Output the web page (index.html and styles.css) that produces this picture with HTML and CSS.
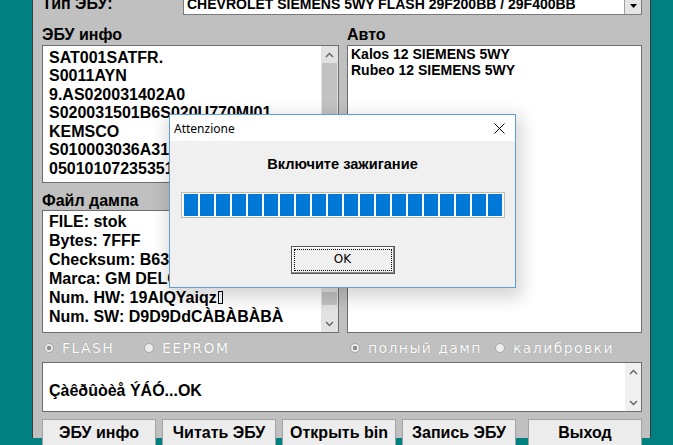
FILE: index.html
```html
<!DOCTYPE html>
<html lang="ru">
<head>
  <meta charset="UTF-8">
  <title>ЭБУ</title>
  <link rel="stylesheet" href="styles.css">
</head>
<body>
  <div class="window">
    <div class="type-row">
      <span class="type-label">Тип ЭБУ:</span>
      <div class="combo">
        <div class="combo-text">CHEVROLET SIEMENS 5WY FLASH 29F200BB / 29F400BB</div>
        <div class="combo-btn">
          <svg width="7" height="4" viewBox="0 0 7 4"><polygon points="0,0 7,0 3.5,4" fill="#000"/></svg>
        </div>
      </div>
    </div>

    <div class="panels">
      <div class="col col-left">
        <div class="label">ЭБУ инфо</div>
        <div class="listbox ecu-list">
          <div class="items">
            <div>SAT001SATFR.</div>
            <div>S0011AYN</div>
            <div>9.AS020031402A0</div>
            <div>S020031501B6S020U770MI01</div>
            <div>KEMSCO</div>
            <div>S010003036A31B6</div>
            <div>05010107235351</div>
          </div>
          <div class="vscroll">
            <div class="arrow"><svg width="9" height="6" viewBox="0 0 9 6"><polyline points="1,5 4.5,1.5 8,5" fill="none" stroke="#606060" stroke-width="1.3"/></svg></div>
            <div class="thumb thumb-big"></div>
            <div class="track"></div>
          </div>
        </div>

        <div class="label dump-label">Файл дампа</div>
        <div class="listbox dump-list">
          <div class="items">
            <div>FILE: stok</div>
            <div>Bytes: 7FFF</div>
            <div>Checksum: B63A</div>
            <div>Marca: GM DELCO</div>
            <div>Num. HW: 19AIQYaiqz<span class="nochar"></span></div>
            <div>Num. SW: D9D9DdCÀBÀBÀBÀ</div>
          </div>
          <div class="vscroll">
            <div class="arrow"><svg width="9" height="6" viewBox="0 0 9 6"><polyline points="1,5 4.5,1.5 8,5" fill="none" stroke="#606060" stroke-width="1.3"/></svg></div>
            <div class="track"></div>
            <div class="thumb thumb-small"></div>
            <div class="track-end"></div>
            <div class="arrow"><svg width="9" height="6" viewBox="0 0 9 6"><polyline points="1,1 4.5,4.5 8,1" fill="none" stroke="#606060" stroke-width="1.3"/></svg></div>
          </div>
        </div>
      </div>

      <div class="col col-right">
        <div class="label">Авто</div>
        <div class="listbox car-list">
          <div class="items">
            <div>Kalos 12 SIEMENS 5WY</div>
            <div>Rubeo 12 SIEMENS 5WY</div>
          </div>
        </div>
      </div>
    </div>

    <div class="radios">
      <div class="radio-group group-left">
        <label class="radio radio-flash"><span class="dot checked"></span>FLASH</label>
        <label class="radio"><span class="dot"></span>EEPROM</label>
      </div>
      <div class="radio-group group-right">
        <label class="radio radio-full"><span class="dot checked"></span>полный дамп</label>
        <label class="radio"><span class="dot"></span>калибровки</label>
      </div>
    </div>

    <div class="status">
      <div class="status-text">Çàêðûòèå ÝÁÓ...OK</div>
      <div class="status-scroll">
        <div class="arrow"><svg width="9" height="6" viewBox="0 0 9 6"><polyline points="1,5 4.5,1.5 8,5" fill="none" stroke="#606060" stroke-width="1.3"/></svg></div>
        <div class="arrow"><svg width="9" height="6" viewBox="0 0 9 6"><polyline points="1,1 4.5,4.5 8,1" fill="none" stroke="#606060" stroke-width="1.3"/></svg></div>
      </div>
    </div>

    <div class="buttons">
      <button class="btn">ЭБУ инфо</button>
      <button class="btn">Читать ЭБУ</button>
      <button class="btn">Открыть bin</button>
      <button class="btn">Запись ЭБУ</button>
      <button class="btn btn-exit">Выход</button>
    </div>
  </div>

  <!-- modal message box -->
  <div class="dialog">
    <div class="dlg-title">
      <span>Attenzione</span>
      <svg width="11" height="11" viewBox="0 0 11 11"><path d="M0.5 0.5 L10.5 10.5 M10.5 0.5 L0.5 10.5" stroke="#000" stroke-width="1"/></svg>
    </div>
    <div class="dlg-body">
      <div class="dlg-msg">Включите зажигание</div>
      <div class="progress">
        <i></i><i></i><i></i><i></i><i></i><i></i><i></i><i></i><i></i><i></i>
        <i></i><i></i><i></i><i></i><i></i><i></i><i></i><i></i><i></i><i></i>
      </div>
      <button class="ok-btn"><span>OK</span></button>
    </div>
  </div>
</body>
</html>
```

FILE: styles.css
```css
/* main window */
body {
  margin: 0;
  height: 445px;
  overflow: hidden;
  position: relative;
  background: #008080;
  font-family: "Liberation Sans", Arial, sans-serif;
  color: #000;
}
.window {
  margin-left: 32px;
  width: 619px;
  height: 445px;
  box-sizing: border-box;
  padding: 0 8px 0 9px;
  background: #c0c0c0;
  border-left: 1px solid #3c3c3c;
  border-right: 1px solid #3c3c3c;
}

/* ecu type row */
.type-row {
  display: flex;
  align-items: center;
  height: 22px;
  margin-top: -7px;
}
.type-label {
  font-size: 16px;
  font-weight: bold;
  line-height: 22px;
}
.combo {
  margin-left: auto;
  width: 459px;
  height: 22px;
  box-sizing: border-box;
  display: flex;
  background: #fff;
  border: 1px solid #7a7a7a;
}
.combo-text {
  flex: 1;
  padding-left: 3px;
  font-size: 14px;
  font-weight: bold;
  line-height: 20px;
  white-space: nowrap;
  overflow: hidden;
}
.combo-btn {
  width: 17px;
  display: flex;
  align-items: center;
  justify-content: center;
  padding-top: 4px;
  box-sizing: border-box;
  background: #e6e6e6;
  border-left: 1px solid #a0a0a0;
}

/* list panels */
.panels {
  display: flex;
  gap: 8px;
  margin-top: 10px;
}
.col-left {
  width: 297px;
}
.col-right {
  width: 295px;
}
.label {
  font-size: 16px;
  font-weight: bold;
  line-height: 19px;
  margin-bottom: 1px;
}
.dump-label {
  margin-top: 8px;
  margin-bottom: 0;
}
.listbox {
  display: flex;
  box-sizing: border-box;
  background: #fff;
  border: 1px solid #6e6e6e;
}
.ecu-list {
  height: 138px;
}
.dump-list {
  height: 123px;
}
.car-list {
  height: 288px;
}
.items {
  flex: 1;
  overflow: hidden;
  font-weight: bold;
  white-space: nowrap;
}
.ecu-list .items {
  font-size: 16px;
  line-height: 18.5px;
  padding: 2.5px 0 0 6px;
}
.dump-list .items {
  font-size: 16px;
  line-height: 19px;
  padding: 0.5px 0 0 6px;
}
.car-list .items {
  font-size: 14px;
  line-height: 16px;
  padding: 0 0 0 3px;
}
.nochar {
  display: inline-block;
  width: 3px;
  height: 11px;
  margin-left: 1px;
  border: 1px solid #000;
  vertical-align: -1px;
}

/* scroll bars */
.vscroll {
  width: 17px;
  display: flex;
  flex-direction: column;
  background: #e2e2e2;
}
.arrow {
  height: 17px;
  display: flex;
  align-items: center;
  justify-content: center;
  flex-shrink: 0;
}
.track {
  flex: 1;
}
.thumb {
  margin: 0 1px;
  background: #c2c2c2;
}
.thumb-big {
  height: 96px;
}
.thumb-small {
  height: 13px;
}
.track-end {
  height: 10px;
}

/* radio buttons (disabled look) */
.radios {
  display: flex;
  gap: 8px;
  height: 20px;
  margin-top: 5px;
}
.radio-group {
  display: flex;
  align-items: center;
}
.group-left {
  width: 297px;
  padding-left: 2px;
  box-sizing: border-box;
}
.group-right {
  width: 295px;
  padding-left: 3px;
  box-sizing: border-box;
}
.radio {
  display: flex;
  align-items: center;
  gap: 8px;
  font-family: "DejaVu Sans", sans-serif;
  font-size: 14px;
  letter-spacing: 1.4px;
  color: #fdfdfd;
  text-shadow: 0 0 1px rgba(0, 0, 0, 0.3);
}
.radio-flash {
  width: 100px;
}
.radio-full {
  width: 145px;
}
.dot {
  width: 10px;
  height: 10px;
  box-sizing: border-box;
  border-radius: 50%;
  background: #ededed;
  border: 1px solid #a8a8a8;
}
.dot.checked {
  background: radial-gradient(circle, #8e8e8e 0 2px, #ededed 2.6px);
}

/* log box */
.status {
  display: flex;
  height: 50px;
  margin-top: 4px;
  box-sizing: border-box;
  background: #fff;
  border: 1px solid #6e6e6e;
}
.status-text {
  flex: 1;
  padding: 19px 0 0 6px;
  font-size: 16px;
  font-weight: bold;
  line-height: 18.7px;
}
.status-scroll {
  width: 16px;
  display: flex;
  flex-direction: column;
  justify-content: space-between;
  background: #f0f0f0;
}

/* command buttons */
.buttons {
  display: flex;
  gap: 6px;
  margin-top: 7px;
}
.btn {
  width: 114px;
  height: 30px;
  box-sizing: border-box;
  padding: 0 0 2px;
  background: #ececec;
  border: 1px solid #a3a3a3;
  font-family: "Liberation Sans", Arial, sans-serif;
  font-size: 16px;
  font-weight: bold;
  line-height: 26px;
  color: #000;
}
.btn-exit {
  margin-left: auto;
}

/* message box */
.dialog {
  position: absolute;
  left: 169px;
  top: 114px;
  width: 347px;
  height: 174px;
  box-sizing: border-box;
  background: #f0f0f0;
  border: 1px solid #5e9fd8;
  box-shadow: 2px 6px 16px 4px rgba(0, 0, 0, 0.16);
}
.dlg-title {
  height: 26px;
  display: flex;
  align-items: center;
  justify-content: space-between;
  padding: 0 10px 0 4px;
  background: #fff;
  font-family: "Noto Sans", sans-serif;
  font-size: 12px;
}
.dlg-body {
  display: flex;
  flex-direction: column;
  align-items: center;
  padding-top: 15px;
}
.dlg-msg {
  font-size: 14.6px;
  font-weight: bold;
  line-height: 17px;
}
.progress {
  display: flex;
  gap: 2px;
  width: 324px;
  height: 26px;
  margin-top: 19px;
  padding: 1px 2px;
  box-sizing: border-box;
  background: #fafafa;
  border: 1px solid #bcbcbc;
}
.progress i {
  flex: 1;
  background: #0078d7;
}
.ok-btn {
  display: flex;
  width: 104px;
  height: 28px;
  margin-top: 28px;
  padding: 2px;
  box-sizing: border-box;
  background: #f0f0f0;
  border: 1px solid #555;
  box-shadow: inset -1px -1px #8a8a8a, inset 1px 1px #fff;
}
.ok-btn span {
  flex: 1;
  border: 1px dotted #000;
  font-family: "DejaVu Sans", sans-serif;
  font-size: 12px;
  line-height: 18px;
  text-align: center;
}
```
